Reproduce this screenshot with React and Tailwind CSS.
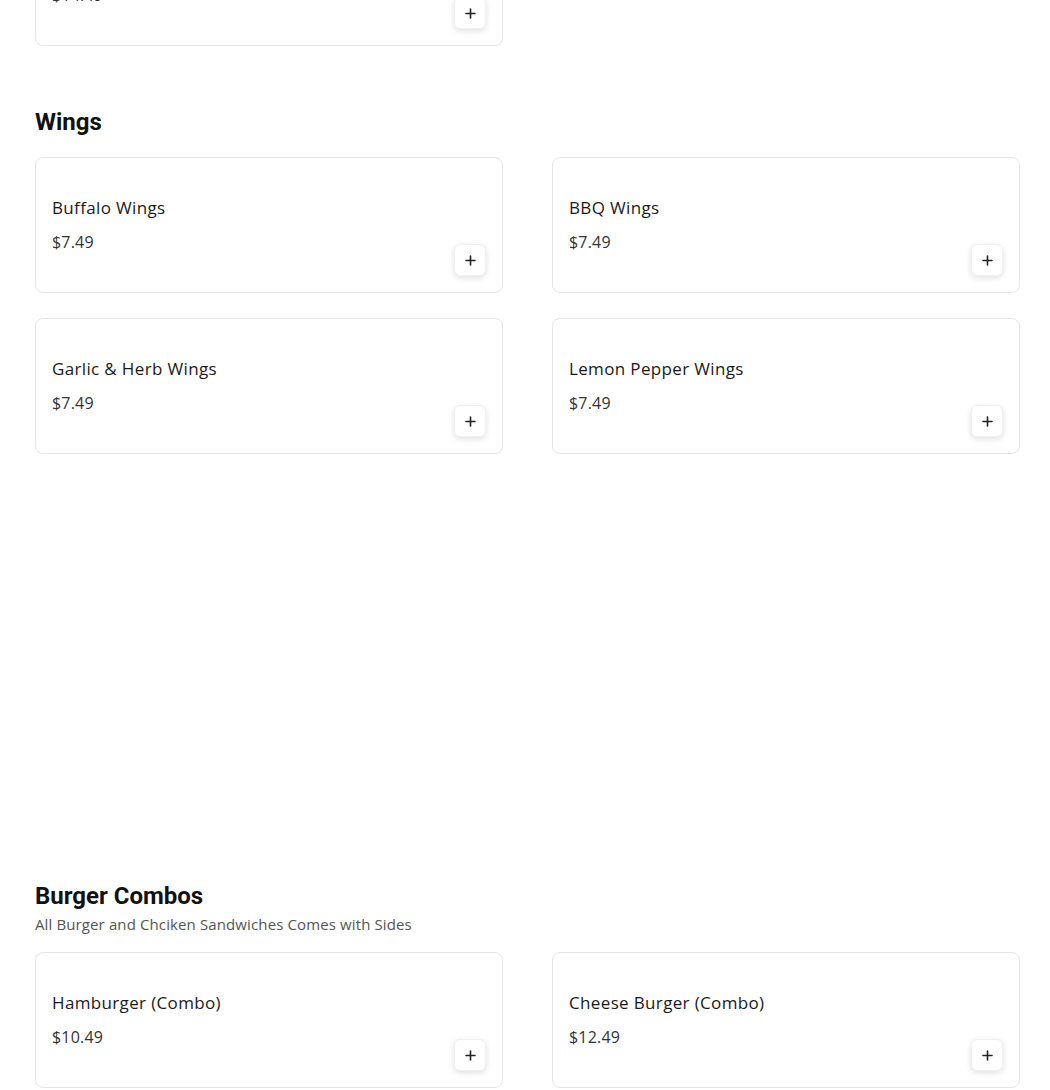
import React from "react";

const body = { fontFamily: '"Open Sans", "Noto Sans", sans-serif' };

const sections = [
  {
    title: "Wings",
    items: [
      { name: "Buffalo Wings", price: "$7.49" },
      { name: "BBQ Wings", price: "$7.49" },
      { name: "Garlic & Herb Wings", price: "$7.49" },
      { name: "Lemon Pepper Wings", price: "$7.49" },
    ],
  },
  {
    title: "Burger Combos",
    subtitle: "All Burger and Chciken Sandwiches Comes with Sides",
    items: [
      { name: "Hamburger (Combo)", price: "$10.49" },
      { name: "Cheese Burger (Combo)", price: "$12.49" },
    ],
  },
];

const PlusIcon = () => (
  <svg width="11" height="11" viewBox="0 0 11 11" fill="none">
    <path d="M5.5 1v9M1 5.5h9" stroke="#222" strokeWidth="1.6" strokeLinecap="round" />
  </svg>
);

const ItemCard = ({ item }) => (
  <div className="h-[136px] bg-white border border-[#e6e6e6] rounded-lg flex p-4">
    <div className="flex-1 flex flex-col justify-center gap-[10px]">
      {item.name && (
        <h3 className="text-[17px] leading-6 font-medium tracking-[0.35px] text-[#1a1a1a]">
          {item.name}
        </h3>
      )}
      <p className="text-[16px] leading-6 tracking-[0.2px] text-[#333]">{item.price}</p>
    </div>
    <button className="self-end w-8 h-8 rounded-md bg-white border border-[#f0f0f0] shadow-[0_2px_6px_rgba(0,0,0,0.12)] flex items-center justify-center">
      <PlusIcon />
    </button>
  </div>
);

export default function App() {
  return (
    <div className="min-h-screen bg-white overflow-hidden" style={body}>
      <div className="px-[35px] w-[1055px]">
        {/* tail of the previous section, scrolled partly out of view */}
        <div className="-mt-[90px] grid grid-cols-2 gap-x-[49px] gap-y-6">
          <ItemCard item={{ name: "Chicken Tenders", price: "$14.49" }} />
        </div>

        {sections.map((section, i) => (
          <section key={section.title} className={i === 0 ? "mt-[60px]" : "mt-[426px]"}>
            <h2
              className="text-[24px] leading-8 font-bold text-[#111]"
              style={{ fontFamily: "Roboto, sans-serif" }}
            >
              {section.title}
            </h2>
            {section.subtitle && (
              <p className="text-[15px] leading-5 tracking-[0.12px] text-[#555] mt-[2px]">
                {section.subtitle}
              </p>
            )}
            <div
              className={`grid grid-cols-2 gap-x-[49px] gap-y-[25px] ${
                section.subtitle ? "mt-[18px]" : "mt-[19px]"
              }`}
            >
              {section.items.map((item) => (
                <ItemCard key={item.name} item={item} />
              ))}
            </div>
          </section>
        ))}
      </div>
    </div>
  );
}
